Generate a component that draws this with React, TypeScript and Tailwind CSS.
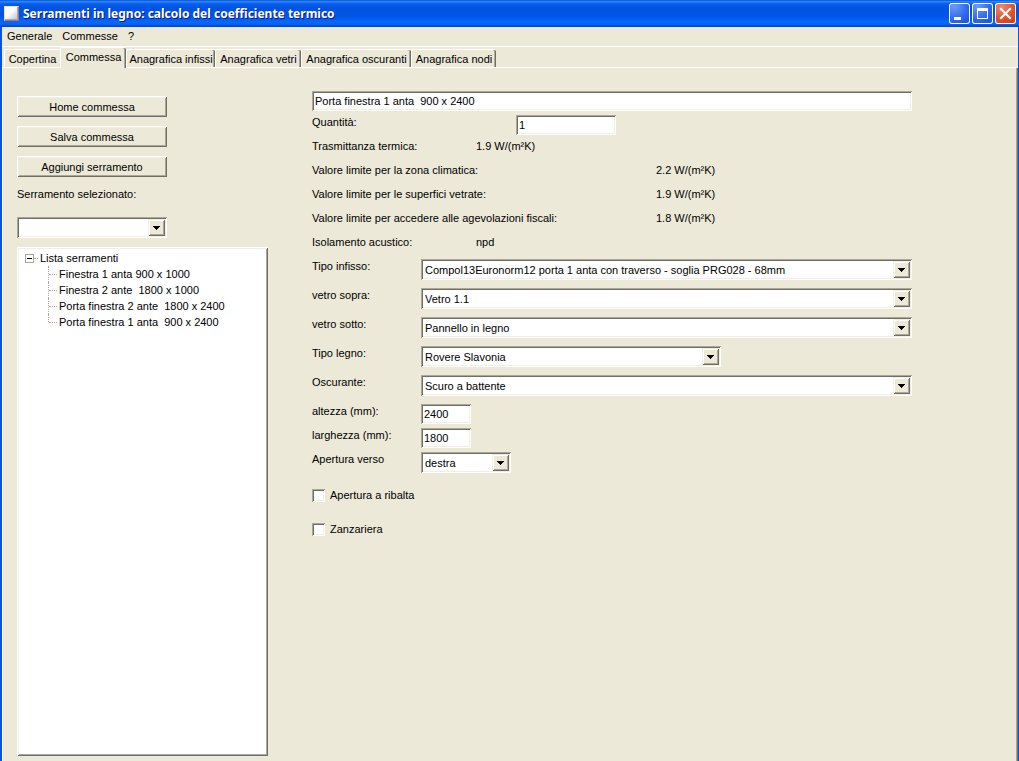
import type { ReactNode } from "react";

const TABS = [
  { label: "Copertina", width: "w-[56px]" },
  { label: "Commessa", width: "w-[66px]", active: true },
  { label: "Anagrafica infissi", width: "w-[89px]" },
  { label: "Anagrafica vetri", width: "w-[86px]" },
  { label: "Anagrafica oscuranti", width: "w-[110px]" },
  { label: "Anagrafica nodi", width: "w-[85px]" },
];

const SERRAMENTI = [
  "Finestra 1 anta 900 x 1000",
  "Finestra 2 ante  1800 x 1000",
  "Porta finestra 2 ante  1800 x 2400",
  "Porta finestra 1 anta  900 x 2400",
];

const RAISED =
  "shadow-[inset_1px_1px_0_#fff,inset_-1px_-1px_0_#716f64,inset_2px_2px_0_#f1efe2,inset_-2px_-2px_0_#aca899]";
const RAISED_SOFT =
  "shadow-[inset_1px_1px_0_#f1efe2,inset_-1px_-1px_0_#716f64,inset_2px_2px_0_#fff,inset_-2px_-2px_0_#aca899]";
const SUNKEN =
  "shadow-[inset_1px_1px_0_#aca899,inset_-1px_-1px_0_#fff,inset_2px_2px_0_#716f64,inset_-2px_-2px_0_#f1efe2]";

/** Blue caption bar with the window controls. */
function TitleBar() {
  return (
    <header className="flex h-[27px] items-center bg-[linear-gradient(180deg,#0a4fd0_0%,#2a86fb_6%,#0a5cea_14%,#0054e3_30%,#0055e5_60%,#0668fd_82%,#0562f5_90%,#0040c0_100%)] pl-1 pr-[3px]">
      <svg width="16" height="16" viewBox="0 0 16 16" aria-hidden="true">
        <defs>
          <linearGradient id="pane" x1="0" y1="0" x2="1" y2="1">
            <stop offset="0.45" stopColor="#fff" />
            <stop offset="1" stopColor="#a9c8f2" />
          </linearGradient>
        </defs>
        <path d="M0 0h15v15H0z" fill="#e6e4f0" />
        <path d="M15 0v15H0l2-2h11V2z" fill="#a87470" />
        <path d="M14 1v13H1l1-1h11V2z" fill="#c89c94" />
        <path d="M1 1h12v12H1z" fill="url(#pane)" />
      </svg>
      <h1 className="ml-[3px] flex-1 whitespace-nowrap font-['Noto_Sans',sans-serif] text-[12px] font-bold text-white [text-shadow:1px_1px_0_#0a1883]">
        Serramenti in legno: calcolo del coefficiente termico
      </h1>
      <div className="flex gap-[2px]">
        <CaptionButton label="Riduci a icona">
          <path d="M5 14h7v3H5z" fill="#fff" />
        </CaptionButton>
        <CaptionButton label="Ingrandisci">
          <path d="M5 5h11v11H5zM6 8v7h9V8z" fill="#fff" fillRule="evenodd" />
        </CaptionButton>
        <CaptionButton label="Chiudi" close>
          <path d="M6 6l9 9M15 6l-9 9" stroke="#fff" strokeWidth="2.2" strokeLinecap="square" />
        </CaptionButton>
      </div>
    </header>
  );
}

function CaptionButton({ label, close, children }: { label: string; close?: boolean; children: ReactNode }) {
  const fill = close
    ? "bg-[radial-gradient(circle_at_30%_20%,#ee8a6c,#e2502a_55%,#c33a12)]"
    : "bg-[radial-gradient(circle_at_25%_15%,#6f9bf5,#2f68ee_55%,#1a4cd6)]";
  return (
    <button type="button" aria-label={label} className={`size-[21px] overflow-hidden rounded-[3px] ${fill} shadow-[inset_0_0_0_1px_#fff]`}>
      <svg width="21" height="21" viewBox="0 0 21 21" aria-hidden="true">
        {children}
      </svg>
    </button>
  );
}

function MenuBar() {
  return (
    <nav className="flex h-5 items-start gap-[10px] border-b border-white pl-[5px] pt-px">
      <button type="button">Generale</button>
      <button type="button">Commesse</button>
      <button type="button">?</button>
    </nav>
  );
}

function TabStrip() {
  return (
    <div role="tablist" className="flex h-5 items-end pl-[2px]">
      {TABS.map((tab) => (
        <button
          key={tab.label}
          type="button"
          role="tab"
          aria-selected={Boolean(tab.active)}
          className={`${tab.width} shrink-0 whitespace-nowrap rounded-t-[2px] border-l border-t border-white text-center ${
            tab.active
              ? "z-10 -mb-px h-[21px] bg-[#ece9d8] pb-[2px] shadow-[inset_-1px_0_0_#716f64,inset_-2px_0_0_#aca899]"
              : "h-[18px] pt-px shadow-[inset_-1px_0_0_#716f64,inset_-2px_0_0_#aca899] first:shadow-none"
          }`}
        >
          {tab.label}
        </button>
      ))}
    </div>
  );
}

function PushButton({ children }: { children: ReactNode }) {
  return (
    <button type="button" className={`h-[21px] w-[150px] ${RAISED}`}>
      {children}
    </button>
  );
}

/** Combo box with the classic bevelled arrow on its right end. */
function Combo({ id, value, className }: { id: string; value: string; className: string }) {
  return (
    <div className={`relative h-[21px] bg-white ${SUNKEN} ${className}`}>
      <select id={id} defaultValue={value} className="h-full w-full appearance-none bg-transparent pl-1 pr-5 outline-none">
        <option value={value}>{value}</option>
      </select>
      <span className={`pointer-events-none absolute right-[2px] top-[2px] flex h-[17px] w-[17px] items-center justify-center bg-[#ece9d8] ${RAISED_SOFT}`}>
        <svg width="7" height="4" viewBox="0 0 7 4" shapeRendering="crispEdges" aria-hidden="true">
          <path d="M0 0h7v1H6v1H5v1H4v1H3V3H2V2H1V1H0z" />
        </svg>
      </span>
    </div>
  );
}

function TextBox({ id, value, className, label }: { id: string; value: string; className: string; label?: string }) {
  return (
    <input id={id} type="text" aria-label={label} defaultValue={value} className={`h-5 bg-white px-[3px] outline-none ${SUNKEN} ${className}`} />
  );
}

function Field({ id, label, labelWidth = "w-[109px]", height = "h-6", children }: { id: string; label: string; labelWidth?: string; height?: string; children: ReactNode }) {
  return (
    <div className={`flex items-start ${height}`}>
      <label htmlFor={id} className={`shrink-0 leading-5 ${labelWidth}`}>
        {label}
      </label>
      <div className="flex flex-1 pt-[3px]">{children}</div>
    </div>
  );
}

function Reading({ label, value, labelWidth }: { label: string; value: string; labelWidth: string }) {
  return (
    <div className="flex h-6 whitespace-nowrap leading-5">
      <dt className={`shrink-0 ${labelWidth}`}>{label}</dt>
      <dd>{value}</dd>
    </div>
  );
}

function CheckBox({ label }: { label: string }) {
  return (
    <label className="flex h-[34px] items-center gap-[5px]">
      <input type="checkbox" className={`size-[13px] appearance-none bg-white ${SUNKEN}`} />
      {label}
    </label>
  );
}

function Tree() {
  return (
    <div className={`mt-[9px] flex-1 bg-white pl-2 pt-[3px] leading-4 ${RAISED}`}>
      <div className="flex items-center">
        <button type="button" aria-label="Comprimi" className="flex size-[9px] items-center justify-center border border-[#aca899]">
          <span className="h-px w-[5px] bg-black" />
        </button>
        <span className="mr-[2px] w-1 border-t border-dotted border-[#aca899]" />
        Lista serramenti
      </div>
      <ul className="ml-[23px]">
        {SERRAMENTI.map((name) => (
          <li key={name} className="group flex h-4 whitespace-pre">
            <span className="h-full border-l border-dotted border-[#aca899] group-last:h-2" />
            <span className="mr-[2px] mt-2 w-2 border-t border-dotted border-[#aca899]" />
            {name}
          </li>
        ))}
      </ul>
    </div>
  );
}

function Sidebar() {
  return (
    <aside className="flex w-[251px] shrink-0 flex-col">
      <div className="flex flex-col gap-[9px]">
        <PushButton>Home commessa</PushButton>
        <PushButton>Salva commessa</PushButton>
        <PushButton>Aggiungi serramento</PushButton>
      </div>
      <label htmlFor="serramento" className="mb-[13px] mt-[7px] leading-5">
        Serramento selezionato:
      </label>
      <Combo id="serramento" value="" className="w-[150px]" />
      <Tree />
    </aside>
  );
}

function DetailForm() {
  return (
    <form className="mr-[106px] flex flex-1 flex-col">
      <TextBox id="nome" label="Nome serramento" value="Porta finestra 1 anta  900 x 2400" className="-mt-[5px] mb-px w-full" />
      <Field id="quantita" label="Quantità:" labelWidth="w-[204px]">
        <TextBox id="quantita" value="1" className="w-[100px]" />
      </Field>
      <dl>
        <Reading label="Trasmittanza termica:" value="1.9 W/(m²K)" labelWidth="w-[164px]" />
        <Reading label="Valore limite per la zona climatica:" value="2.2 W/(m²K)" labelWidth="w-[344px]" />
        <Reading label="Valore limite per le superfici vetrate:" value="1.9 W/(m²K)" labelWidth="w-[344px]" />
        <Reading label="Valore limite per accedere alle agevolazioni fiscali:" value="1.8 W/(m²K)" labelWidth="w-[344px]" />
        <Reading label="Isolamento acustico:" value="npd" labelWidth="w-[164px]" />
      </dl>
      <Field id="infisso" label="Tipo infisso:" height="h-[29px]">
        <Combo id="infisso" value="Compol13Euronorm12 porta 1 anta con traverso - soglia PRG028 - 68mm" className="w-full" />
      </Field>
      <Field id="vetro-sopra" label="vetro sopra:" height="h-[29px]">
        <Combo id="vetro-sopra" value="Vetro 1.1" className="w-full" />
      </Field>
      <Field id="vetro-sotto" label="vetro sotto:" height="h-[29px]">
        <Combo id="vetro-sotto" value="Pannello in legno" className="w-full" />
      </Field>
      <Field id="legno" label="Tipo legno:" height="h-[29px]">
        <Combo id="legno" value="Rovere Slavonia" className="w-[300px]" />
      </Field>
      <Field id="oscurante" label="Oscurante:" height="h-[29px]">
        <Combo id="oscurante" value="Scuro a battente" className="w-full" />
      </Field>
      <Field id="altezza" label="altezza (mm):">
        <TextBox id="altezza" value="2400" className="w-[50px]" />
      </Field>
      <Field id="larghezza" label="larghezza (mm):">
        <TextBox id="larghezza" value="1800" className="w-[50px]" />
      </Field>
      <Field id="apertura" label="Apertura verso">
        <Combo id="apertura" value="destra" className="w-[90px]" />
      </Field>
      <div className="mt-[5px]">
        <CheckBox label="Apertura a ribalta" />
        <CheckBox label="Zanzariera" />
      </div>
    </form>
  );
}

export default function App() {
  return (
    <div className="flex min-h-screen flex-col bg-[#ece9d8] font-['Liberation_Sans',Arial,sans-serif] text-[11px] leading-4 text-black">
      <TitleBar />
      <div className="flex flex-1 flex-col border-l-2 border-r border-l-[#0855dd] border-r-[#0855dd]">
        <MenuBar />
        <TabStrip />
        <main className="flex flex-1 gap-11 border-l border-t border-white pb-[5px] pl-[14px] pt-[28px] shadow-[inset_-1px_0_0_#716f64,inset_-2px_0_0_#aca899]">
          <Sidebar />
          <DetailForm />
        </main>
      </div>
    </div>
  );
}
